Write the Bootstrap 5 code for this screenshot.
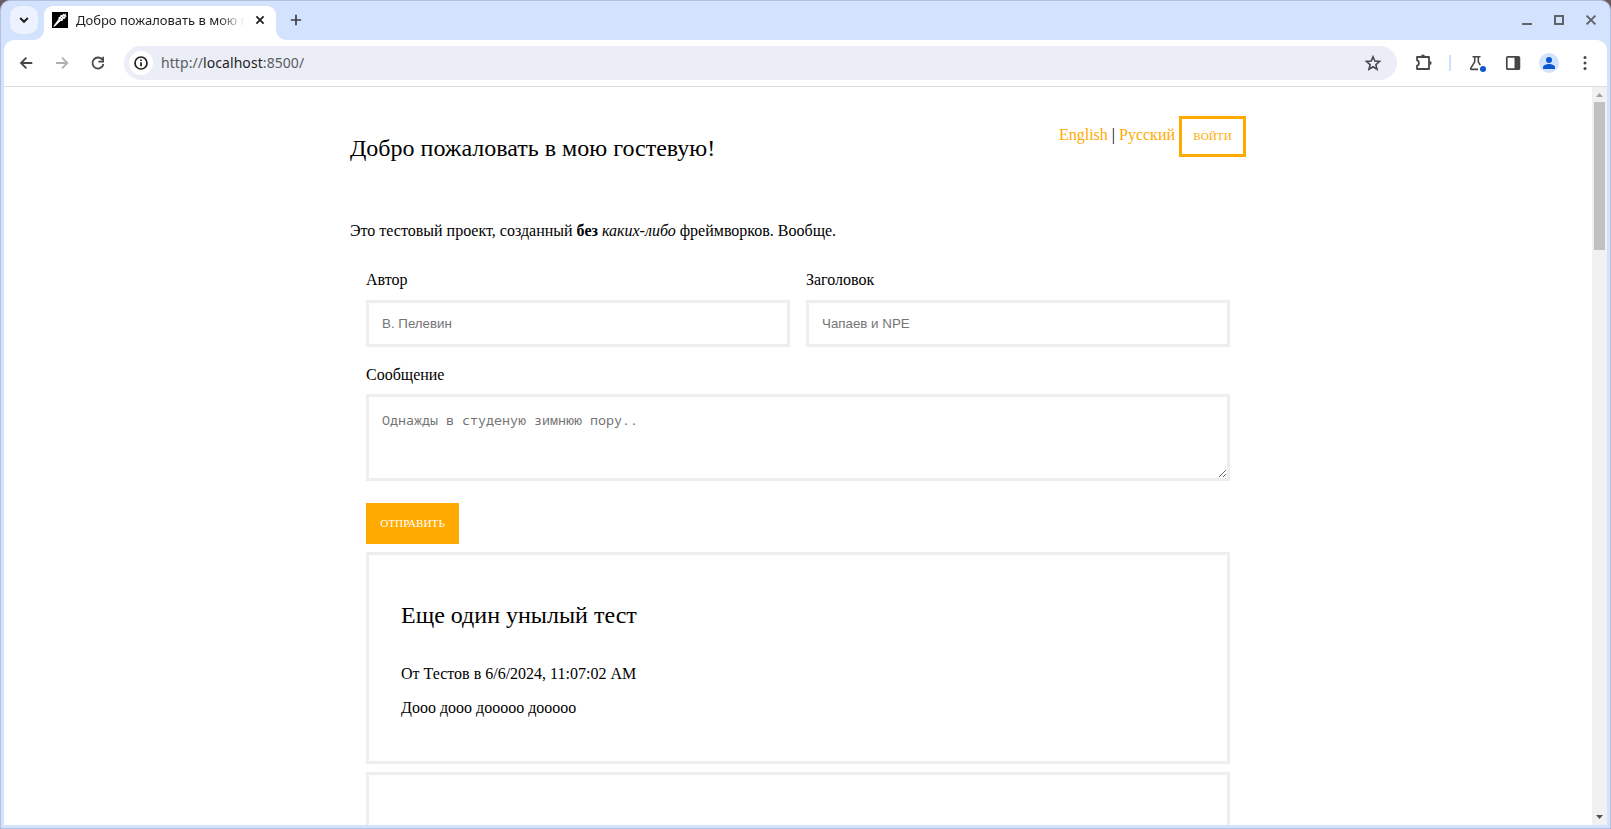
<!DOCTYPE html>
<html lang="ru">
<head>
<meta charset="utf-8">
<meta name="viewport" content="width=device-width, initial-scale=1">
<title>Добро пожаловать в мою гостевую!</title>
<link rel="stylesheet" href="https://cdn.jsdelivr.net/npm/bootstrap@5.3.0/dist/css/bootstrap.min.css">
<style>
  html, body { height: 100%; overflow: hidden; }
  body { background: #6b5a5e; }
  svg { display: block; flex: none; }
  .win { height: 100vh; background: #d3e3fd; border: 1px solid #b3c1e0; border-radius: 10px 10px 0 0; padding: 0 3px 3px; font-family: "Noto Sans", sans-serif; }
  .tabstrip { height: 39px; flex: none; padding: 5px 6px 0; }
  .tab-search { width: 28px; height: 28px; border-radius: 10px; background: #ecf2fe; }
  .tab-item { width: 232px; height: 34px; background: #fff; border-radius: 9px 9px 0 0; margin-left: 6px; padding: 0 10px 6px 8px; position: relative; }
  .tab-item::before, .tab-item::after { content: ""; position: absolute; bottom: 0; width: 10px; height: 10px; }
  .tab-item::before { left: -10px; background: radial-gradient(circle at 0 0, transparent 9.5px, #fff 10px); }
  .tab-item::after { right: -10px; background: radial-gradient(circle at 100% 0, transparent 9.5px, #fff 10px); }
  .tab-title { width: 172px; margin-left: 8px; font-size: 13px; line-height: 20px; color: #1f1f1f; -webkit-mask-image: linear-gradient(90deg, #000 142px, transparent 169px); }
  .wctl { gap: 20px; padding: 0 4px 6px 0; }
  .toolbar { height: 47px; flex: none; background: #fff; border-radius: 10px 10px 0 0; border-bottom: 1px solid #dcdcdc; padding: 0 12px; }
  .omni { height: 34px; border-radius: 17px; background: #ebeef7; margin-left: 16px; padding: 0 14px 0 5px; }
  .info-dot { width: 24px; height: 24px; border-radius: 50%; background: #fff; }
  .url { font-size: 14px; line-height: 20px; letter-spacing: .07px; color: #5a5c60; margin-left: 8px; }
  .url b { font-weight: 400; color: #1f1f1f; }
  .tsep { width: 2px; height: 16px; background: #cfe0fc; }
  .view { min-height: 0; background: #fff; }
  .page { font: 16px/18px "Liberation Serif", serif; color: #000; overflow: hidden; }
  .wrap { width: 896px; }
  .page h1, .page h2 { font-size: 24px; line-height: 28px; font-weight: 400; margin: 0; }
  .wrap a { color: #fa0; text-decoration: none; }
  .btn-guest { height: 41px; border: 3px solid #fa0; border-radius: 0; padding: 0; font: 11.2px/13px "Liberation Serif", serif; text-transform: uppercase; }
  .btn-login, .btn-login:hover { width: 67px; color: #fa0; background: #fff; }
  .btn-send, .btn-send:hover { width: 93px; color: #fff; background: #fa0; }
  .fields { padding: 0 16px; }
  .fields .form-label { margin: 0 0 11px; display: block; line-height: 18px; }
  .fields .form-control { border: 3px solid #eee; border-radius: 0; padding: 13px; color: #000; background: #fff; }
  .fields input.form-control { height: 47px; font: 13.333px/15px "Liberation Sans", sans-serif; }
  .fields textarea.form-control { height: 87px; min-height: 0; padding-top: 14px; font: 13.333px/18px "Noto Sans Mono", "DejaVu Sans Mono", monospace; display: block; }
  .fields .form-control::placeholder { color: #757575; }
  .post { border: 3px solid #eee; border-radius: 0; height: 212px; padding: 46px 32px 0; margin-bottom: 8px; color: #000; }
  .sbar { width: 15px; flex: none; background: #f1f1f1; }
  .sthumb { width: 11px; height: 148px; background: #c1c1c1; }
</style>
</head>
<body>
<div class="win d-flex flex-column">
  <div class="tabstrip d-flex">
    <div class="tab-search d-flex align-items-center justify-content-center">
      <svg width="10" height="8" viewBox="0 0 10 8" fill="none" stroke="#1f1f1f" stroke-width="2"><path d="M1.2 2 5 5.8 8.8 2"/></svg>
    </div>
    <div class="tab-item d-flex align-items-center">
      <svg width="16" height="16" viewBox="0 0 16 16"><path d="M0 0h16v16H0z"/><path fill="#fff" d="M1.400 15 2 13.200 6.300 7.600 6.600 5.200 8.200 4.600 8.600 2.800 10.300 3.200 11 1.400 12.200 2.400 14.300 1.200 13.600 3.200 15 4 13.500 5 13.200 6.800 11.400 6.700 10.400 8.900 8.600 9 3 14.200z"/><path stroke="#000" stroke-width=".6" d="m9 5 1.500 1.200M11.500 3.800l.6 1.200M7.700 7.100l1 .8"/></svg>
      <div class="tab-title text-nowrap">Добро пожаловать в мою г</div>
      <svg class="ms-auto" width="12" height="12" viewBox="0 0 12 12" stroke="#1f1f1f" stroke-width="1.8"><path d="m2.400 2.400 7.200 7.200M9.600 2.400 2.400 9.600"/></svg>
    </div>
    <svg style="margin:8px 0 0 14px" width="12" height="12" viewBox="0 0 12 12" stroke="#3c4043" stroke-width="1.7"><path d="M6 .8v10.400M.8 6h10.400"/></svg>
    <div class="wctl ms-auto d-flex align-items-center">
      <svg width="12" height="12" viewBox="0 0 12 12" fill="#5f6368"><path d="M1 9h10v2H1z"/></svg>
      <svg width="12" height="12" viewBox="0 0 12 12" fill="none" stroke="#5f6368" stroke-width="2"><path d="M2 2h8v8H2z"/></svg>
      <svg width="12" height="12" viewBox="0 0 12 12" stroke="#5f6368" stroke-width="2"><path d="m1.600 1.600 8.800 8.800M10.400 1.600l-8.800 8.800"/></svg>
    </div>
  </div>
  <div class="toolbar d-flex align-items-center">
    <svg width="20" height="20" viewBox="0 0 20 20" fill="none" stroke="#474747" stroke-width="1.8"><path d="M16.300 10H5.300M10.400 4.600 5 10l5.400 5.400"/></svg>
    <svg class="ms-3" width="20" height="20" viewBox="0 0 20 20" fill="none" stroke="#b0b0b0" stroke-width="1.8"><path d="M4 10h11M10 4.600 15.400 10 10 15.400"/></svg>
    <svg class="ms-3" width="20" height="20" viewBox="0 0 20 20" fill="none" stroke="#474747" stroke-width="1.8"><path d="M14.600 7A5.500 5.500 0 1 0 15.400 11"/><path fill="#474747" stroke="none" d="M16 3.800v5.600h-5.600V7.700h3.900V3.800z"/></svg>
    <div class="omni d-flex align-items-center flex-grow-1">
      <div class="info-dot d-flex align-items-center justify-content-center">
        <svg width="16" height="16" viewBox="0 0 16 16" fill="none" stroke="#1f1f1f" stroke-width="1.700"><circle cx="8" cy="8" r="6"/><path d="M8 7.200v4M8 4.600v1.500"/></svg>
      </div>
      <div class="url">http://<b>localhost</b>:8500/</div>
      <svg class="ms-auto" width="20" height="20" viewBox="0 0 20 20" fill="none" stroke="#474747" stroke-width="1.600"><path d="m10 3.800 1.800 4.300 4.700.4-3.600 3.100 1.100 4.600-4-2.500-4 2.500 1.100-4.600-3.600-3.100 4.700-.4z"/></svg>
    </div>
    <svg style="margin-left:16px" width="20" height="20" viewBox="0 0 20 20"><path fill="none" stroke="#474747" stroke-width="1.800" stroke-linejoin="round" d="M4 4H16V16H4V12.700C6.500 12.400 6.500 7.600 4 7.300z"/><path fill="#474747" d="M8 3.400a2 2 0 0 1 4 0zM16.600 8a2 2 0 0 1 0 4z"/></svg>
    <div class="tsep" style="margin:0 16px"></div>
    <svg width="20" height="20" viewBox="0 0 20 20"><path fill="none" stroke="#474747" stroke-width="1.600" stroke-linejoin="round" d="M5.500 3.800h8M7.700 3.800v5L3.800 15.200c-.4.700 0 1.200.7 1.200H11M11.300 3.800v5l2 3.300"/><circle cx="16" cy="15.900" r="3" fill="#0b57d0"/></svg>
    <svg style="margin-left:16px" width="20" height="20" viewBox="0 0 20 20"><rect x="3.800" y="3.800" width="12.600" height="12.400" rx="1" fill="none" stroke="#474747" stroke-width="1.700"/><path fill="#474747" d="M11.500 3.500H16v13h-4.500z"/></svg>
    <svg style="margin-left:16px" width="20" height="20" viewBox="0 0 20 20"><circle cx="10" cy="10" r="10" fill="#d3e3fd"/><circle cx="10" cy="7" r="3" fill="#0b57d0"/><path fill="#0b57d0" d="M4 16v-1.700C4 12.300 7.500 11 10 11s6 1.300 6 3.300V16z"/></svg>
    <svg style="margin-left:16px" width="20" height="20" viewBox="0 0 20 20" fill="#474747"><circle cx="10" cy="4.500" r="1.500"/><circle cx="10" cy="10" r="1.500"/><circle cx="10" cy="15.500" r="1.500"/></svg>
  </div>
  <div class="view d-flex flex-grow-1">
    <main class="page flex-grow-1">
      <div class="wrap mx-auto">
        <header class="d-flex justify-content-between" style="padding-top:29px">
          <h1 style="padding-top:18px">Добро пожаловать в мою гостевую!</h1>
          <div class="d-flex align-items-start">
            <div style="padding:10px 4px 0 0"><a href="#">English</a> | <a href="#">Русский</a></div>
            <button class="btn btn-guest btn-login">Войти</button>
          </div>
        </header>
        <p style="margin:60px 0 31px">Это тестовый проект, созданный <b>без</b> <i>каких-либо</i> фреймворков. Вообще.</p>
        <div class="fields">
          <form>
            <div class="row gx-3">
              <div class="col-6"><label class="form-label" for="author">Автор</label><input class="form-control" id="author" placeholder="В. Пелевин"></div>
              <div class="col-6"><label class="form-label" for="subject">Заголовок</label><input class="form-control" id="subject" placeholder="Чапаев и NPE"></div>
            </div>
            <label class="form-label" style="margin:19px 0 10px" for="message">Сообщение</label>
            <textarea class="form-control" id="message" placeholder="Однажды в студеную зимнюю пору.."></textarea>
            <button type="button" class="btn btn-guest btn-send d-block" style="margin:22px 0 8px">Отправить</button>
          </form>
          <article class="card post">
            <h2>Еще один унылый тест</h2>
            <p style="margin:36px 0 16px">От Тестов в 6/6/2024, 11:07:02 AM</p>
            <p class="mb-0">Дооо дооо дооооо дооооо</p>
          </article>
          <article class="card post"></article>
        </div>
      </div>
    </main>
    <div class="sbar d-flex flex-column align-items-center">
      <svg width="15" height="15" viewBox="0 0 15 15"><path fill="#a3a3a3" d="M4 10h7L7.500 6z"/></svg>
      <div class="sthumb"></div>
      <svg class="mt-auto" width="15" height="15" viewBox="0 0 15 15"><path fill="#505050" d="M4 5h7L7.500 9z"/></svg>
    </div>
  </div>
</div>
<script src="https://cdn.jsdelivr.net/npm/bootstrap@5.3.0/dist/js/bootstrap.bundle.min.js"></script>
</body>
</html>
